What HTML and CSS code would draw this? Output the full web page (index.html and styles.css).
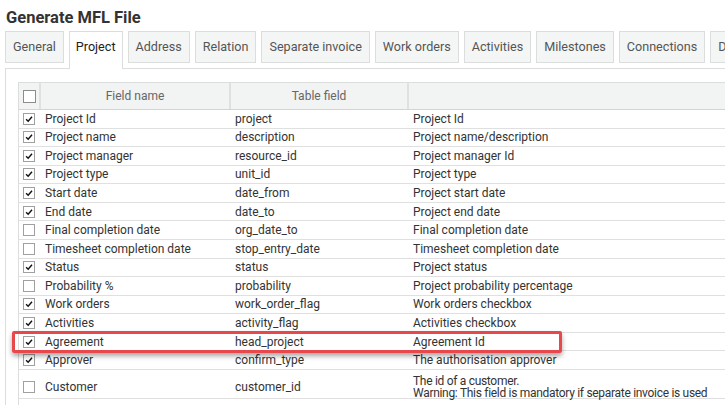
FILE: index.html
```html
<!DOCTYPE html>
<html>
<head>
<meta charset="utf-8">
<link rel="stylesheet" href="styles.css">
</head>
<body>
<h1 class="title">Generate MFL File</h1>
<div class="tabs">
  <div class="tab">General</div>
  <div class="tab active">Project</div>
  <div class="tab">Address</div>
  <div class="tab">Relation</div>
  <div class="tab">Separate invoice</div>
  <div class="tab">Work orders</div>
  <div class="tab">Activities</div>
  <div class="tab">Milestones</div>
  <div class="tab">Connections</div>
  <div class="tab">Details</div>
</div>
<div class="panel">
  <div class="grid">
    <div class="row head">
      <div class="cell chk"><span class="box"></span></div>
      <div class="cell hc">Field name</div>
      <div class="cell hc">Table field</div>
      <div class="cell hc"></div>
    </div>
    <div class="row"><div class="cell chk"><span class="box on"><svg viewBox="0 0 12 12"><path d="M2.5 6.2 L5 8.6 L9.6 3.2"/></svg></span></div><div class="cell">Project Id</div><div class="cell">project</div><div class="cell">Project Id</div></div>
    <div class="row"><div class="cell chk"><span class="box on"><svg viewBox="0 0 12 12"><path d="M2.5 6.2 L5 8.6 L9.6 3.2"/></svg></span></div><div class="cell">Project name</div><div class="cell">description</div><div class="cell">Project name/description</div></div>
    <div class="row"><div class="cell chk"><span class="box on"><svg viewBox="0 0 12 12"><path d="M2.5 6.2 L5 8.6 L9.6 3.2"/></svg></span></div><div class="cell">Project manager</div><div class="cell">resource_id</div><div class="cell">Project manager Id</div></div>
    <div class="row"><div class="cell chk"><span class="box on"><svg viewBox="0 0 12 12"><path d="M2.5 6.2 L5 8.6 L9.6 3.2"/></svg></span></div><div class="cell">Project type</div><div class="cell">unit_id</div><div class="cell">Project type</div></div>
    <div class="row"><div class="cell chk"><span class="box on"><svg viewBox="0 0 12 12"><path d="M2.5 6.2 L5 8.6 L9.6 3.2"/></svg></span></div><div class="cell">Start date</div><div class="cell">date_from</div><div class="cell">Project start date</div></div>
    <div class="row"><div class="cell chk"><span class="box on"><svg viewBox="0 0 12 12"><path d="M2.5 6.2 L5 8.6 L9.6 3.2"/></svg></span></div><div class="cell">End date</div><div class="cell">date_to</div><div class="cell">Project end date</div></div>
    <div class="row"><div class="cell chk"><span class="box"></span></div><div class="cell">Final completion date</div><div class="cell">org_date_to</div><div class="cell">Final completion date</div></div>
    <div class="row"><div class="cell chk"><span class="box"></span></div><div class="cell">Timesheet completion date</div><div class="cell">stop_entry_date</div><div class="cell">Timesheet completion date</div></div>
    <div class="row"><div class="cell chk"><span class="box on"><svg viewBox="0 0 12 12"><path d="M2.5 6.2 L5 8.6 L9.6 3.2"/></svg></span></div><div class="cell">Status</div><div class="cell">status</div><div class="cell">Project status</div></div>
    <div class="row"><div class="cell chk"><span class="box"></span></div><div class="cell">Probability %</div><div class="cell">probability</div><div class="cell">Project probability percentage</div></div>
    <div class="row"><div class="cell chk"><span class="box on"><svg viewBox="0 0 12 12"><path d="M2.5 6.2 L5 8.6 L9.6 3.2"/></svg></span></div><div class="cell">Work orders</div><div class="cell">work_order_flag</div><div class="cell">Work orders checkbox</div></div>
    <div class="row"><div class="cell chk"><span class="box on"><svg viewBox="0 0 12 12"><path d="M2.5 6.2 L5 8.6 L9.6 3.2"/></svg></span></div><div class="cell">Activities</div><div class="cell">activity_flag</div><div class="cell">Activities checkbox</div></div>
    <div class="row marked"><div class="cell chk"><span class="box on"><svg viewBox="0 0 12 12"><path d="M2.5 6.2 L5 8.6 L9.6 3.2"/></svg></span></div><div class="cell">Agreement</div><div class="cell">head_project</div><div class="cell">Agreement Id</div><span class="highlight"></span></div>
    <div class="row"><div class="cell chk"><span class="box on"><svg viewBox="0 0 12 12"><path d="M2.5 6.2 L5 8.6 L9.6 3.2"/></svg></span></div><div class="cell">Approver</div><div class="cell">confirm_type</div><div class="cell">The authorisation approver</div></div>
    <div class="row tall"><div class="cell chk"><span class="box"></span></div><div class="cell">Customer</div><div class="cell">customer_id</div><div class="cell warn">The id of a customer.<br>Warning: This field is mandatory if separate invoice is used</div></div>
    <div class="row"><div class="cell chk"></div><div class="cell"></div><div class="cell"></div><div class="cell"></div></div>
  </div>
</div>
</body>
</html>
```
FILE: styles.css
```css
html, body {
  margin: 0;
  padding: 0;
  overflow: hidden;
  background: #ffffff;
  font-family: Roboto, "Liberation Sans", Arial, sans-serif;
  color: #333333;
}

.title {
  margin: 0 0 2px 0;
  padding: 7px 0 0 6px;
  height: 22px;
  line-height: 22px;
  font-size: 16.5px;
  font-weight: 700;
  color: #333333;
}

.tabs {
  display: flex;
  gap: 5px;
  padding-left: 5px;
  height: 37px;
  align-items: flex-start;
  white-space: nowrap;
  width: 760px;
}

.tab {
  box-sizing: border-box;
  height: 32px;
  line-height: 30px;
  padding: 0 7px;
  border: 1px solid #dcdddd;
  background: #f4f5f5;
  font-size: 12.6px;
  color: #555555;
  flex: none;
}

.tab.active {
  height: 38px;
  padding: 0 6px;
  background: #ffffff;
  border-bottom: none;
  color: #222222;
  position: relative;
  z-index: 2;
}

.panel {
  margin-left: 5px;
  border-left: 1px solid #dcdddd;
  border-top: 1px solid #dcdddd;
  padding: 13px 0 0 12px;
  height: 400px;
}

.grid {
  width: 730px;
  border: 1px solid #dcdddd;
  border-bottom: none;
  font-size: 12px;
}

.row {
  box-sizing: border-box;
  display: grid;
  grid-template-columns: 20px 190px 178px 1fr;
  height: 18.57px;
  border-bottom: 1px solid #e0e0e0;
  align-items: center;
}

.row.head {
  height: 27px;
  background: #f2f3f3;
  border-bottom: 1px solid #d2d4d4;
  color: #666666;
  align-items: stretch;
}

.row.head .cell {
  display: flex;
  align-items: center;
}

.row.head .hc {
  justify-content: center;
  border-left: 2px solid #dfe1e1;
  padding: 0;
}

.cell {
  padding-left: 6px;
  white-space: nowrap;
  line-height: 14px;
}

.cell.chk {
  padding-left: 4px;
  display: flex;
  align-items: center;
}

.box {
  box-sizing: border-box;
  display: inline-block;
  width: 12px;
  height: 12px;
  border: 1px solid #a0a0a0;
  background: #ffffff;
}

.row.head .box {
  width: 13px;
  height: 13px;
  border-color: #8c8c8c;
}

.box svg {
  display: block;
  width: 10px;
  height: 10px;
}

.box svg path {
  fill: none;
  stroke: #111111;
  stroke-width: 1.7;
}

.row.tall {
  height: 29px;
  padding-top: 5px;
}

.row.tall .cell {
  line-height: 12.5px;
}

.cell.warn {
  letter-spacing: -0.3px;
}

.row.marked {
  position: relative;
}

.highlight {
  position: absolute;
  left: -7px;
  top: -2px;
  width: 550px;
  height: 22px;
  box-sizing: border-box;
  border: 3px solid #e8474c;
  border-radius: 2px;
  box-shadow: 0 3px 5px rgba(0, 0, 0, 0.35);
  pointer-events: none;
}
```
